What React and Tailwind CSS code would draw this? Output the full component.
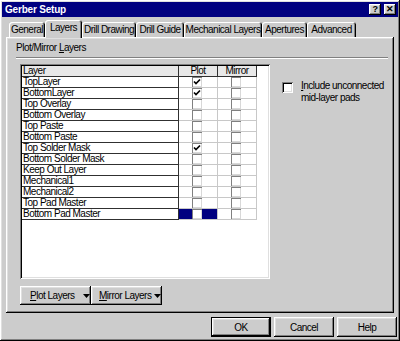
import React from "react";

const raised =
  "shadow-[inset_-1px_-1px_#000,inset_1px_1px_#fff,inset_-2px_-2px_#808080,inset_2px_2px_#dfdfdf]";
const sunken =
  "shadow-[inset_1px_1px_#808080,inset_-1px_-1px_#fff,inset_2px_2px_#000,inset_-2px_-2px_#dfdfdf]";

const tabs = [
  { label: "General", w: "w-[36px]" },
  { label: "Layers", w: "w-[37px]", active: true },
  { label: "Drill Drawing", w: "w-[54px]" },
  { label: "Drill Guide", w: "w-[48px]" },
  { label: "Mechanical Layers", w: "w-[78px]" },
  { label: "Apertures", w: "w-[45px]" },
  { label: "Advanced", w: "w-[49px]" },
];

const layers = [
  { name: "TopLayer", plot: true },
  { name: "BottomLayer", plot: true },
  { name: "Top Overlay" },
  { name: "Bottom Overlay" },
  { name: "Top Paste" },
  { name: "Bottom Paste" },
  { name: "Top Solder Mask", plot: true },
  { name: "Bottom Solder Mask" },
  { name: "Keep Out Layer" },
  { name: "Mechanical1" },
  { name: "Mechanical2" },
  { name: "Top Pad Master" },
  { name: "Bottom Pad Master", selected: true },
];

function Check({ checked }) {
  return (
    <div className="w-[10px] h-[10px] bg-white shadow-[inset_1px_1px_#808080,inset_-1px_-1px_#d8d8d8] flex items-center justify-center">
      {checked && (
        <svg width="8" height="8" viewBox="0 0 8 8">
          <polyline points="1,3.5 3,5.5 7,1.5" fill="none" stroke="#000" strokeWidth="1.7" />
        </svg>
      )}
    </div>
  );
}

function Arrow() {
  return (
    <svg width="7" height="4" viewBox="0 0 7 4" className="ml-[8px]">
      <polygon points="0,0 7,0 3.5,4" fill="#000" />
    </svg>
  );
}

export default function App() {
  return (
    <div className={`w-[400px] h-[341px] bg-[#cccccc] p-[2px] flex flex-col font-['Liberation_Sans',Arial,sans-serif] text-[10px] tracking-[-0.5px] text-black ${raised}`}>
      {/* Title bar */}
      <div className="h-[15px] bg-[#000080] flex items-center justify-between pl-[3px] pr-[2px]">
        <span className="text-white font-bold text-[10px] tracking-[-0.2px] leading-[15px]">Gerber Setup</span>
        <div className="flex gap-[3px]">
          <div className={`w-[12px] h-[11px] bg-[#cccccc] flex items-center justify-center text-[9px] font-bold leading-none ${raised}`}>?</div>
          <div className={`w-[12px] h-[11px] bg-[#cccccc] flex items-center justify-center text-[9px] font-bold leading-none ${raised}`}>✕</div>
        </div>
      </div>

      {/* Tabs */}
      <div className="h-[20px] flex items-end pl-[7px]">
        {tabs.map((t) =>
          t.active ? (
            <div
              key={t.label}
              className={`${t.w} h-[18px] -mb-[1px] relative z-10 bg-[#cccccc] rounded-t-[3px] flex justify-center pt-[2px] leading-[12px] whitespace-nowrap shadow-[inset_1px_1px_#fff,inset_-1px_0_#000,inset_-2px_0_#808080]`}
            >
              {t.label}
            </div>
          ) : (
            <div
              key={t.label}
              className={`${t.w} h-[15px] bg-[#cccccc] rounded-t-[3px] flex justify-center pt-[2px] leading-[12px] whitespace-nowrap shadow-[inset_1px_1px_#fff,inset_-1px_0_#000,inset_-2px_0_#808080]`}
            >
              {t.label}
            </div>
          )
        )}
      </div>

      {/* Tab panel */}
      <div className={`mx-[4px] h-[276px] flex flex-col pt-[5px] px-[10px] ${raised}`}>
        <div className="h-[12px] leading-[12px]">
          Plot/Mirror <span className="underline">L</span>ayers
        </div>
        <div className="mt-[3px] w-[372px] h-[2px] border-t border-[#808080] border-b border-b-white" />

        <div className="mt-[5px] flex">
          {/* Grid */}
          <div className={`ml-[4px] w-[250px] h-[215px] bg-white p-[2px] ${sunken}`}>
            <div className="flex h-[11px] leading-[10px]">
              <div className="w-[157px] bg-[#e8e8e8] border-r border-b border-[#303030] pl-[1px]">Layer</div>
              <div className="w-[39px] bg-[#e8e8e8] border-r border-b border-[#303030] text-center">Plot</div>
              <div className="w-[39px] bg-[#e8e8e8] border-r border-b border-[#303030] text-center">Mirror</div>
            </div>
            {layers.map((l) => (
              <div key={l.name} className="flex h-[11px] leading-[10px]">
                <div className="w-[157px] border-r border-b border-[#303030] pl-[1px] whitespace-nowrap">{l.name}</div>
                <div className="w-[39px] border-r border-b border-[#c8c8c8] flex">
                  <div className={`w-[13px] ${l.selected ? "bg-[#000080]" : ""}`} />
                  <Check checked={l.plot} />
                  <div className={`flex-1 ${l.selected ? "bg-[#000080]" : ""}`} />
                </div>
                <div className="w-[39px] border-r border-b border-[#c8c8c8] flex pl-[13px]">
                  <Check />
                </div>
              </div>
            ))}
          </div>

          {/* Include unconnected */}
          <div className="ml-[12px] mt-[18px] flex items-start">
            <div className={`w-[11px] h-[11px] bg-white ${sunken}`} />
            <div className="ml-[8px] -mt-[2px] leading-[12px] whitespace-nowrap">
              <span className="underline">I</span>nclude unconnected
              <br />
              mid-layer pads
            </div>
          </div>
        </div>

        <div className="mt-[7px] ml-[4px] flex">
          <div className={`w-[71px] h-[19px] flex items-center pl-[10px] whitespace-nowrap ${raised}`}>
            <span>
              <span className="underline">P</span>lot Layers
            </span>
            <Arrow />
          </div>
          <div className={`w-[71px] h-[19px] flex items-center pl-[8px] whitespace-nowrap ${raised}`}>
            <span>
              <span className="underline">M</span>irror Layers
            </span>
            <svg width="7" height="4" viewBox="0 0 7 4" className="ml-[3px]">
              <polygon points="0,0 7,0 3.5,4" fill="#000" />
            </svg>
          </div>
        </div>
      </div>

      {/* Dialog buttons */}
      <div className="mt-[4px] flex justify-end gap-[3px] pr-[1px]">
        <div className="w-[60px] h-[20px] border border-black flex items-center justify-center">
          <div className={`w-full h-full flex items-center justify-center ${raised}`}>OK</div>
        </div>
        <div className={`w-[60px] h-[20px] flex items-center justify-center ${raised}`}>Cancel</div>
        <div className={`w-[60px] h-[20px] flex items-center justify-center ${raised}`}>Help</div>
      </div>
    </div>
  );
}
